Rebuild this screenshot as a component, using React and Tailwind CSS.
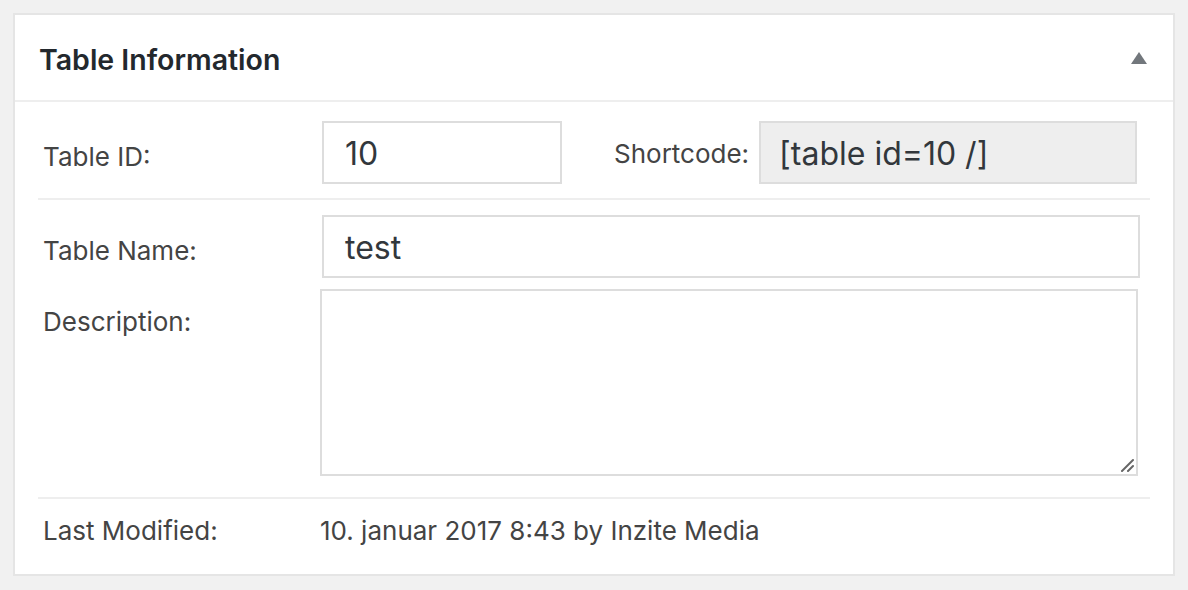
export default function App() {
  const font = { fontFamily: 'Inter, "Noto Sans", sans-serif' };
  return (
    <div className="min-h-[590px] bg-[#f1f1f1] pt-[13px] pl-[13px]" style={font}>
      <div className="w-[1162px] h-[563px] border-2 border-[#e5e5e5] bg-white">
        <div className="h-[87px] border-b-2 border-[#eeeeee] flex items-center justify-between pl-[24px] pr-[26px]">
          <h2 className="text-[28.5px] font-semibold text-[#23282d] tracking-[0px] pt-[5px]">Table Information</h2>
          <svg width="16" height="12" viewBox="0 0 16 12">
            <path d="M8 0 L16 12 L0 12 Z" fill="#72777c" />
          </svg>
        </div>
        <div className="px-[23px]">
          <div className="flex items-center pt-[19px] pb-[14px] border-b-2 border-[#eeeeee]">
            <div className="w-[284px] pl-[5px] pt-[7px] text-[26px] text-[#444]">Table ID:</div>
            <div className="w-[240px] h-[63px] border-2 border-[#dddddd] flex items-center pl-[21px] pt-[2px] text-[32px] text-[#32373c]">10</div>
            <div className="ml-[52px] text-[26px] text-[#444] pt-[2px]">Shortcode:</div>
            <div className="ml-[10px] w-[378px] h-[63px] border-2 border-[#dddddd] bg-[#eeeeee] flex items-center pl-[18px] pt-[2px] text-[32px] text-[#32373c]">[table id=10 /]</div>
          </div>
          <div className="flex items-center pt-[15px]">
            <div className="w-[284px] pl-[5px] pt-[7px] text-[26px] text-[#444]">Table Name:</div>
            <div className="w-[818px] h-[63px] border-2 border-[#dddddd] flex items-center pl-[21px] pt-[2px] text-[32px] text-[#32373c]">test</div>
          </div>
          <div className="flex items-start pt-[11px] pb-[21px] border-b-2 border-[#eeeeee]">
            <div className="w-[282px] pl-[5px] pt-[13px] text-[26px] text-[#444]">Description:</div>
            <div className="relative w-[818px] h-[187px] border-2 border-[#dddddd]">
              <svg className="absolute right-[2px] bottom-[2px]" width="14" height="14" viewBox="0 0 14 14">
                <path d="M2 13 L13 2" stroke="#666" strokeWidth="2" strokeLinecap="round" />
                <path d="M8 13 L13 8" stroke="#666" strokeWidth="2" strokeLinecap="round" />
              </svg>
            </div>
          </div>
          <div className="flex items-center pt-[18px] leading-[28px]">
            <div className="w-[282px] pl-[5px] text-[26px] text-[#444]">Last Modified:</div>
            <div className="text-[26px] text-[#444]">10. januar 2017 8:43 by Inzite Media</div>
          </div>
        </div>
      </div>
    </div>
  );
}
